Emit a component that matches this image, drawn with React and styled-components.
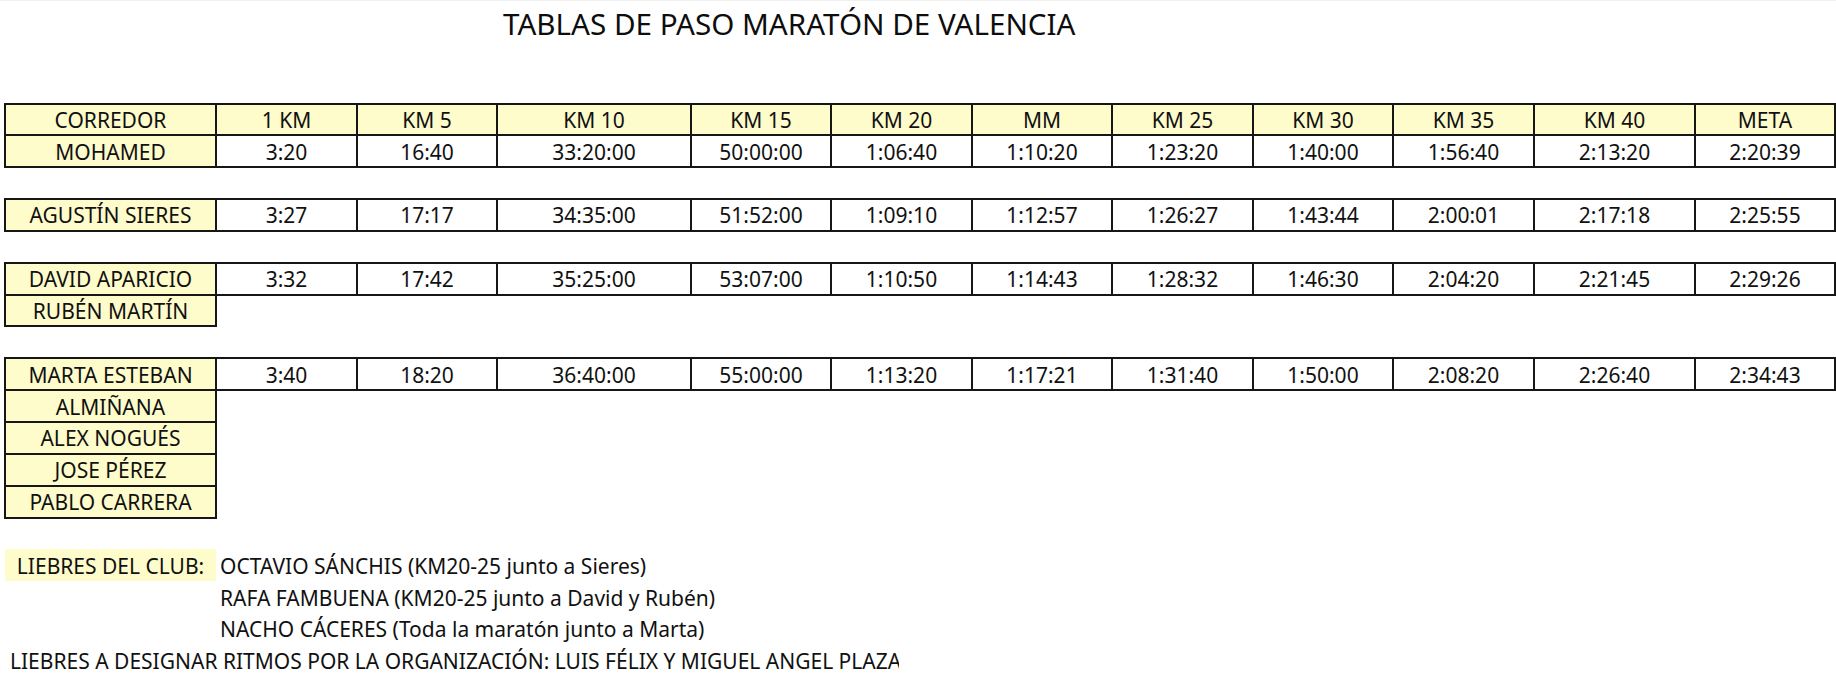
import React from 'react'
import styled, { createGlobalStyle } from 'styled-components'

const GlobalStyle = createGlobalStyle`
  html, body {
    margin: 0;
    padding: 0;
    background: #ffffff;
  }
  body {
    font-family: "Noto Sans", "Liberation Sans", sans-serif;
    font-stretch: semi-condensed;
    color: #111111;
  }
`

const HEADERS = ['CORREDOR', '1 KM', 'KM 5', 'KM 10', 'KM 15', 'KM 20', 'MM', 'KM 25', 'KM 30', 'KM 35', 'KM 40', 'META']
const WIDTHS = [211, 141, 140, 194, 140, 141, 140, 141, 140, 141, 161, 140]

// one group per pace: the runner with the split times, then the ones running with them
const GROUPS = [
  {
    name: 'MOHAMED',
    times: ['3:20', '16:40', '33:20:00', '50:00:00', '1:06:40', '1:10:20', '1:23:20', '1:40:00', '1:56:40', '2:13:20', '2:20:39'],
    others: [],
  },
  {
    name: 'AGUSTÍN SIERES',
    times: ['3:27', '17:17', '34:35:00', '51:52:00', '1:09:10', '1:12:57', '1:26:27', '1:43:44', '2:00:01', '2:17:18', '2:25:55'],
    others: [],
  },
  {
    name: 'DAVID APARICIO',
    times: ['3:32', '17:42', '35:25:00', '53:07:00', '1:10:50', '1:14:43', '1:28:32', '1:46:30', '2:04:20', '2:21:45', '2:29:26'],
    others: ['RUBÉN MARTÍN'],
  },
  {
    name: 'MARTA ESTEBAN',
    times: ['3:40', '18:20', '36:40:00', '55:00:00', '1:13:20', '1:17:21', '1:31:40', '1:50:00', '2:08:20', '2:26:40', '2:34:43'],
    others: ['ALMIÑANA', 'ALEX NOGUÉS', 'JOSE PÉREZ', 'PABLO CARRERA'],
  },
]

const CLUB_PACERS = [
  'OCTAVIO SÁNCHIS (KM20-25 junto a Sieres)',
  'RAFA FAMBUENA (KM20-25 junto a David y Rubén)',
  'NACHO CÁCERES (Toda la maratón junto a Marta)',
]

const Page = styled.div`
  border-top: 1px solid #efefef;
  padding: 7px 0 0 4px;
  width: 1836px;
  box-sizing: border-box;
`

const Sheet = styled.table`
  border-collapse: collapse;
  table-layout: fixed;
  width: 1830px;
  font-size: 21px;
`

const Row = styled.tr`
  height: 31.85px;
`

const Cell = styled.td`
  padding: 1px 0 0 ${p => p.$indent || 0}px;
  line-height: 26px;
  text-align: ${p => (p.$left ? 'left' : 'center')};
  vertical-align: middle;
  white-space: nowrap;
  border: ${p => (p.$boxed ? '2px solid #161616' : 'none')};
  background: ${p => (p.$fill ? '#fffccc' : 'transparent')};
`

const Title = styled.td`
  padding: 0 0 0 6px;
  font-size: 29.6px;
  font-stretch: condensed;
  line-height: 30px;
  white-space: nowrap;
  vertical-align: middle;
  color: #0d0d0d;
`

const Clip = styled.div`
  width: 889px;
  overflow: hidden;
  white-space: nowrap;
`

const EmptyRow = () => (
  <Row>
    <Cell colSpan={12} />
  </Row>
)

const RunnerRow = ({ name, times }) => (
  <Row>
    <Cell $boxed $fill>{name}</Cell>
    {times.map((t, i) => (
      <Cell key={i} $boxed>{t}</Cell>
    ))}
  </Row>
)

const NameRow = ({ name }) => (
  <Row>
    <Cell $boxed $fill>{name}</Cell>
    <Cell colSpan={11} />
  </Row>
)

export default function App() {
  return (
    <>
      <GlobalStyle />
      <Page>
        <Sheet>
          <colgroup>
            {WIDTHS.map((w, i) => (
              <col key={i} style={{ width: w }} />
            ))}
          </colgroup>
          <tbody>
            <Row>
              <Cell colSpan={3} />
              <Title colSpan={9}>TABLAS DE PASO MARATÓN DE VALENCIA</Title>
            </Row>
            <EmptyRow />
            <EmptyRow />
            <Row>
              {HEADERS.map(h => (
                <Cell key={h} $boxed $fill>{h}</Cell>
              ))}
            </Row>
            {GROUPS.map((g, gi) => (
              <React.Fragment key={g.name}>
                {gi > 0 && <EmptyRow />}
                <RunnerRow name={g.name} times={g.times} />
                {g.others.map(o => (
                  <NameRow key={o} name={o} />
                ))}
              </React.Fragment>
            ))}
            <EmptyRow />
            {CLUB_PACERS.map((p, i) => (
              <Row key={p}>
                {i === 0 ? <Cell $fill>LIEBRES DEL CLUB:</Cell> : <Cell />}
                <Cell colSpan={11} $left $indent={4}>{p}</Cell>
              </Row>
            ))}
            <Row>
              <Cell colSpan={12} $left $indent={5}>
                <Clip>LIEBRES A DESIGNAR RITMOS POR LA ORGANIZACIÓN: LUIS FÉLIX Y MIGUEL ANGEL PLAZA</Clip>
              </Cell>
            </Row>
          </tbody>
        </Sheet>
      </Page>
    </>
  )
}
